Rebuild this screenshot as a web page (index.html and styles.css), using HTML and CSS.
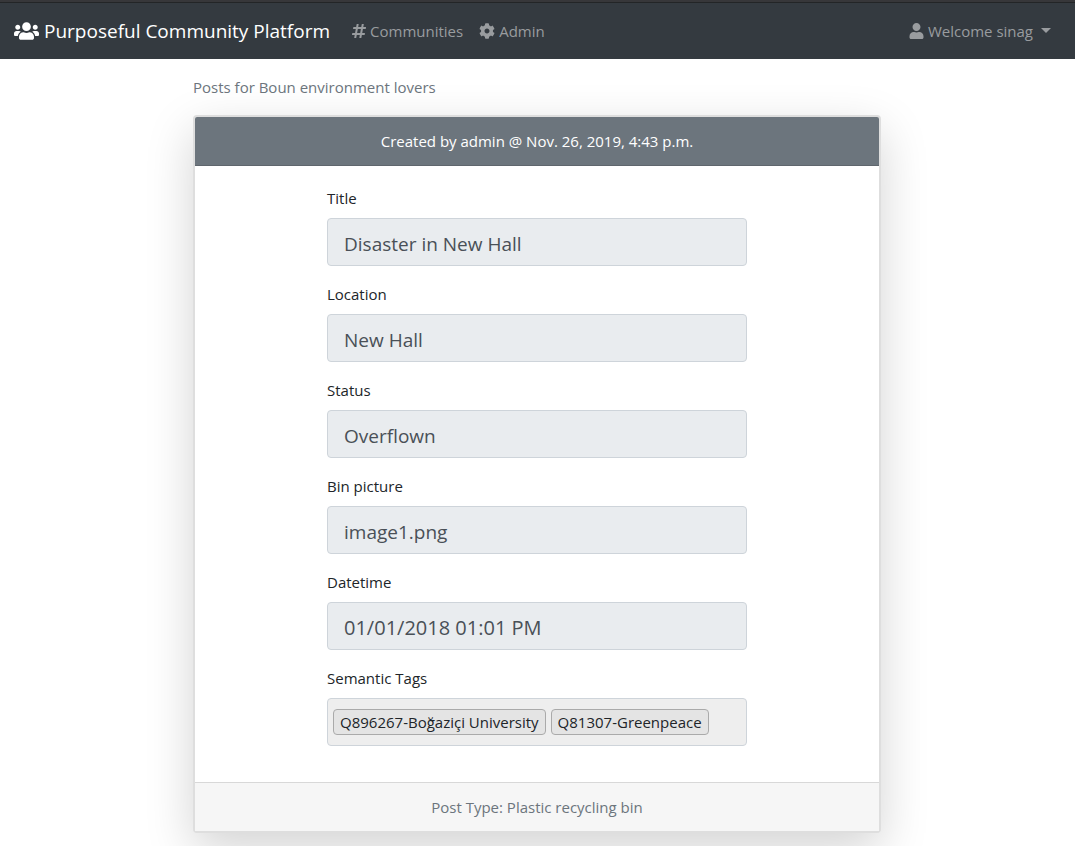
FILE: index.html
```html
<!DOCTYPE html>
<html lang="en">
<head>
<meta charset="utf-8">
<meta name="viewport" content="width=device-width, initial-scale=1">
<title>Purposeful Community Platform</title>
<link rel="stylesheet" href="styles.css">
</head>
<body>
<nav class="navbar">
  <a class="brand" href="#"><svg class="icon icon-users" viewBox="0 0 640 512" aria-hidden="true"><path d="M96 224c35.300 0 64-28.700 64-64s-28.700-64-64-64-64 28.700-64 64 28.700 64 64 64zm448 0c35.300 0 64-28.700 64-64s-28.700-64-64-64-64 28.700-64 64 28.700 64 64 64zm32 32h-64c-17.600 0-33.500 7.100-45.100 18.600 40.300 22.100 68.900 62 75.100 109.400h66c17.700 0 32-14.300 32-32v-32c0-35.300-28.700-64-64-64zm-256 0c61.900 0 112-50.100 112-112S381.900 32 320 32 208 82.100 208 144s50.100 112 112 112zm76.800 32h-8.300c-20.800 10-43.900 16-68.500 16s-47.600-6-68.500-16h-8.300C179.600 288 128 339.600 128 403.200V432c0 26.500 21.500 48 48 48h288c26.500 0 48-21.500 48-48v-28.800c0-63.600-51.600-115.200-115.200-115.200zm-223.700-13.400C161.500 263.100 145.600 256 128 256H64c-35.300 0-64 28.700-64 64v32c0 17.700 14.300 32 32 32h65.900c6.300-47.400 34.900-87.300 75.200-109.400z"/></svg>Purposeful Community Platform</a>
  <ul class="nav-links">
    <li><a class="nav-link" href="#"><svg class="icon icon-hash" viewBox="0 0 448 512" aria-hidden="true"><path d="M440.667 182.109l7.143-40c1.313-7.355-4.342-14.109-11.813-14.109h-74.810l14.623-81.891C377.123 38.754 371.468 32 363.997 32h-40.632a12 12 0 0 0-11.813 9.891L296.175 128H197.540l14.623-81.891C213.477 38.754 207.822 32 200.350 32h-40.632a12 12 0 0 0-11.813 9.891L132.528 128H53.432a12 12 0 0 0-11.813 9.891l-7.143 40C33.163 185.246 38.818 192 46.289 192h74.810L98.242 320H19.146a12 12 0 0 0-11.813 9.891l-7.143 40C-1.123 377.246 4.532 384 12.003 384h74.810L72.190 465.891C70.877 473.246 76.532 480 84.003 480h40.632a12 12 0 0 0 11.813-9.891L151.826 384h98.634l-14.623 81.891C234.523 473.246 240.178 480 247.650 480h40.632a12 12 0 0 0 11.813-9.891L315.472 384h79.096a12 12 0 0 0 11.813-9.891l7.143-40c1.313-7.355-4.342-14.109-11.813-14.109h-74.810l22.857-128h79.096a12 12 0 0 0 11.813-9.891zM261.889 320h-98.634l22.857-128h98.634l-22.857 128z"/></svg>Communities</a></li>
    <li><a class="nav-link" href="#"><svg class="icon icon-cog" viewBox="0 0 512 512" aria-hidden="true"><path d="M487.400 315.700l-42.600-24.600c4.300-23.200 4.300-47 0-70.200l42.600-24.600c4.900-2.800 7.100-8.600 5.500-14-11.100-35.600-30-67.800-54.700-94.600-3.800-4.100-10-5.100-14.800-2.300L380.800 110c-17.900-15.400-38.500-27.300-60.800-35.100V25.800c0-5.600-3.900-10.500-9.400-11.700-36.700-8.200-74.300-7.800-109.200 0-5.500 1.200-9.400 6.100-9.400 11.700V75c-22.200 7.900-42.800 19.800-60.800 35.100L88.700 85.500c-4.900-2.800-11-1.900-14.800 2.300-24.700 26.700-43.600 58.900-54.700 94.600-1.700 5.400.6 11.200 5.500 14L67.300 221c-4.300 23.200-4.300 47 0 70.200l-42.600 24.600c-4.900 2.800-7.100 8.600-5.500 14 11.100 35.600 30 67.800 54.700 94.600 3.800 4.100 10 5.100 14.800 2.300l42.600-24.600c17.900 15.400 38.500 27.300 60.800 35.100v49.200c0 5.600 3.900 10.500 9.400 11.700 36.700 8.200 74.300 7.800 109.200 0 5.500-1.200 9.400-6.100 9.400-11.700v-49.200c22.200-7.900 42.800-19.800 60.800-35.100l42.600 24.600c4.900 2.800 11 1.900 14.800-2.300 24.700-26.700 43.600-58.900 54.700-94.600 1.500-5.500-.7-11.300-5.600-14.100zM256 336c-44.100 0-80-35.900-80-80s35.900-80 80-80 80 35.900 80 80-35.900 80-80 80z"/></svg>Admin</a></li>
  </ul>
  <button class="nav-link user-menu" type="button" aria-haspopup="true"><svg class="icon icon-user" viewBox="0 0 448 512" aria-hidden="true"><path d="M224 256c70.700 0 128-57.300 128-128S294.700 0 224 0 96 57.300 96 128s57.300 128 128 128zm89.600 32h-16.700c-22.200 10.200-46.900 16-72.900 16s-50.600-5.800-72.900-16h-16.700C60.200 288 0 348.200 0 422.400V464c0 26.500 21.500 48 48 48h352c26.500 0 48-21.500 48-48v-41.600c0-74.200-60.200-134.400-134.400-134.400z"/></svg>Welcome sinag<span class="caret"></span></button>
</nav>
<main class="container">
  <p class="page-title">Posts for Boun environment lovers</p>
  <article class="card">
    <header class="card-header">Created by admin @ Nov. 26, 2019, 4:43 p.m.</header>
    <form class="card-body">
      <div class="field"><label for="title">Title</label><input class="control" id="title" type="text" value="Disaster in New Hall" readonly></div>
      <div class="field"><label for="location">Location</label><input class="control" id="location" type="text" value="New Hall" readonly></div>
      <div class="field"><label for="status">Status</label><input class="control" id="status" type="text" value="Overflown" readonly></div>
      <div class="field"><label for="picture">Bin picture</label><input class="control" id="picture" type="text" value="image1.png" readonly></div>
      <div class="field"><label for="datetime">Datetime</label><input class="control control-date" id="datetime" type="text" value="01/01/2018 01:01 PM" readonly></div>
      <div class="field"><span class="label" id="tags-label">Semantic Tags</span>
        <ul class="tags" aria-labelledby="tags-label"><li class="tag">Q896267-Boğaziçi University</li><li class="tag">Q81307-Greenpeace</li></ul>
      </div>
    </form>
    <footer class="card-footer">Post Type: Plastic recycling bin</footer>
  </article>
</main>
</body>
</html>
```
FILE: styles.css
```css
*, *::before, *::after { box-sizing: border-box; }
body {
  margin: 0;
  background: #fff;
  color: #212529;
  font: 15px/24px "Open Sans", "Noto Sans", sans-serif;
}
ul { margin: 0; padding: 0; list-style: none; }
.navbar {
  display: flex;
  align-items: center;
  min-height: 59px;
  padding: 0 16px 0 14px;
  border-top: 2px solid #37373a;
  box-shadow: inset 0 1px #232527;
  background: #343a40;
}
.brand {
  display: flex;
  align-items: center;
  gap: 5px;
  margin-right: 14px;
  color: #fff;
  font-size: 19px;
  line-height: 30px;
  text-decoration: none;
  white-space: nowrap;
}
.icon { flex: none; fill: currentColor; }
.icon-users { width: 25px; height: 20px; }
.icon-hash { width: 14px; height: 16px; }
.icon-user { width: 15px; height: 16px; }
.icon-cog { width: 16px; height: 16px; }
.nav-links { display: flex; }
.nav-link {
  display: flex;
  align-items: center;
  gap: 4px;
  padding: 8px;
  border: 0;
  background: none;
  color: #999c9f;
  font: inherit;
  text-decoration: none;
  white-space: nowrap;
}
.user-menu { margin-left: auto; cursor: pointer; }
.caret {
  margin-left: 4px;
  border: 5px solid transparent;
  border-top-color: currentColor;
  border-bottom: 0;
}
.container { max-width: 689px; margin: 0 auto; padding: 16px 1px 24px 0; }
.page-title { margin: 0 0 16px; color: #6c757d; }
.card {
  border: 2px solid #dedede;
  border-radius: 4px;
  background: #fff;
  box-shadow: 0 16px 48px rgba(0, 0, 0, .175);
}
.card-header {
  padding: 12px 20px;
  border-bottom: 1px solid #5f666d;
  border-radius: 2px 2px 0 0;
  background: #6c757d;
  color: #fff;
  text-align: center;
}
.card-body { max-width: 460px; margin: 0 auto; padding: 20px; }
.field { margin-bottom: 16px; }
.field label, .label { display: block; width: fit-content; margin-bottom: 8px; }
.control {
  display: block;
  width: 100%;
  height: 48px;
  padding: 12px 16px 8px;
  border: 1px solid #ced4da;
  border-radius: 4px;
  background: #e9ecef;
  color: #495057;
  font: 19px/28px "Open Sans", "Noto Sans", sans-serif;
}
.control-date { padding: 10px 16px 8px; font-size: 20px; }
.tags {
  display: flex;
  flex-wrap: wrap;
  align-items: center;
  gap: 5px;
  min-height: 48px;
  padding: 5px;
  border: 1px solid #ced4da;
  border-radius: 4px;
  background: #eee;
}
.tag {
  padding: 0 6px;
  border: 1px solid #aaa;
  border-radius: 4px;
  background: #e4e4e4;
  white-space: nowrap;
}
.card-footer {
  padding: 12px 20px;
  border-top: 1px solid #d8d8d8;
  background: #f6f6f6;
  color: #6c757d;
  text-align: center;
}
```
